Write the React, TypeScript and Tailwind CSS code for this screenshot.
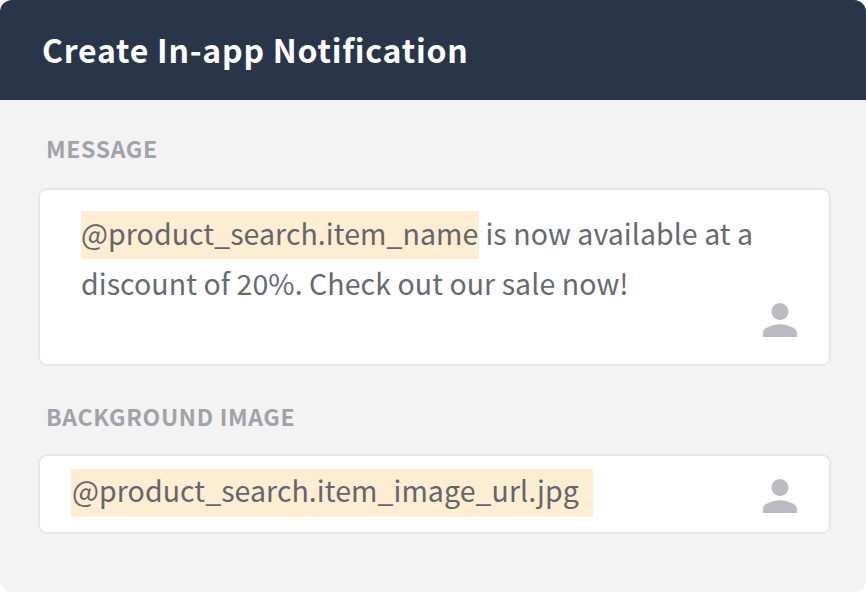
function Person() {
  return (
    <svg viewBox="4 4 16 16" className="h-[34px] w-[34px] shrink-0 fill-[#bbbbc1]" aria-hidden="true">
      <path d="M12 12c2.21 0 4-1.79 4-4s-1.79-4-4-4-4 1.79-4 4 1.79 4 4 4zm0 2c-2.67 0-8 1.34-8 4v2h16v-2c0-2.66-5.33-4-8-4z" />
    </svg>
  );
}

export default function App() {
  return (
    <div className="h-[594px] w-[866px] bg-white font-['Noto_Sans_CJK_JP',sans-serif]">
      <div className="flex h-[592px] flex-col overflow-hidden rounded-xl bg-[#f3f3f3]">
        <header className="flex h-[100px] items-center bg-[#293548] pb-[2px] pl-[42px] text-white">
          <h1 className="whitespace-nowrap text-[32px] font-bold leading-[50px] tracking-[0.77px]">Create In-app Notification</h1>
        </header>
        <main className="px-[38px] pt-[32px]">
          <h2 className="pl-2 text-[23px] font-bold leading-[32px] tracking-[0.67px] text-[#a2a2a9]">MESSAGE</h2>
          <section className="mt-[24px] flex h-[178px] w-[793px] items-end justify-between rounded-[9px] border-2 border-[#e7e7e7] bg-white pr-[32px]">
            <p className="self-start whitespace-nowrap pl-[41px] pt-[18px] text-[28.5px] leading-[50px] tracking-[0.07px] text-[#676973]">
              <span className="block h-[50px]">
                <mark className="inline-block h-[48px] w-[398px] bg-[#fdedd2] leading-[44px] text-[#65656a]">@product_search.item_name</mark> is now available at a
              </span>
              <span className="block h-[50px]">discount of 20%. Check out our sale now!</span>
            </p>
            <div className="-ml-10 mb-[27px]"><Person /></div>
          </section>
          <h2 className="mt-[34px] pl-2 text-[23px] font-bold leading-[32px] tracking-[0.67px] text-[#a2a2a9]">BACKGROUND IMAGE</h2>
          <section className="mt-[22px] flex h-[80px] w-[793px] items-start justify-between rounded-[9px] border-2 border-[#e7e7e7] bg-white pl-[31px] pr-[32px] pt-[13px]">
            <mark className="h-[48px] w-[522px] whitespace-nowrap bg-[#fdedd2] pl-px text-[28.5px] leading-[42px] tracking-[0.07px] text-[#65656a]">@product_search.item_image_url.jpg</mark>
            <div className="mt-[10px]"><Person /></div>
          </section>
        </main>
      </div>
    </div>
  );
}
